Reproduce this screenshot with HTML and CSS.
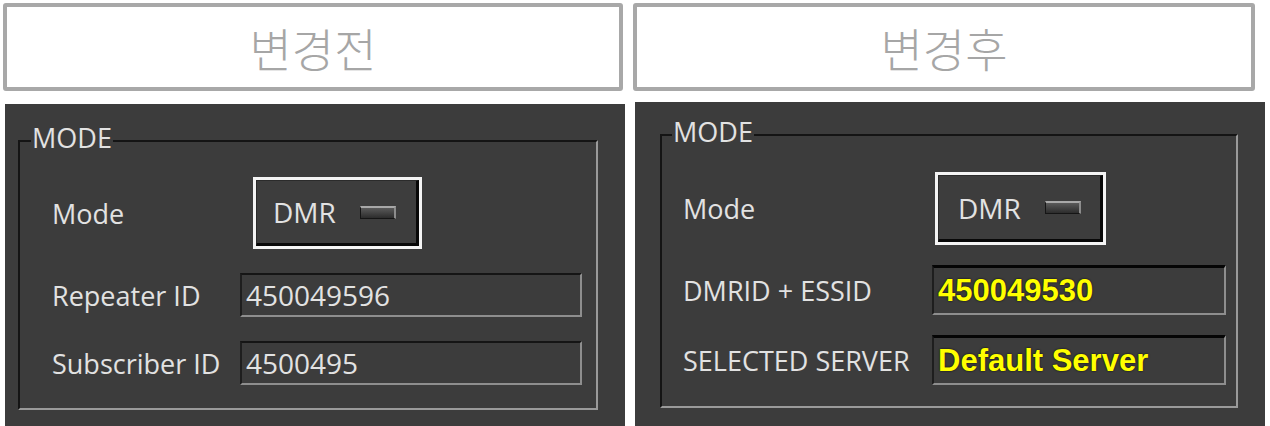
FILE: index.html
```html
<!DOCTYPE html>
<html lang="ko">
<head>
  <meta charset="UTF-8" />
  <title>MODE 변경전 / 변경후</title>
  <link rel="stylesheet" href="styles.css">
</head>
<body>

  <div class="compare">

    <div class="side before">
      <div class="caption">변경전</div>
      <div class="panel">
        <fieldset class="group">
          <legend>MODE</legend>
          <div class="rows">
            <span class="label">Mode</span>
            <div class="mode-btn">
              <div class="mode-face">DMR <span class="led"></span></div>
            </div>
            <span class="label">Repeater ID</span>
            <div class="field">450049596</div>
            <span class="label">Subscriber ID</span>
            <div class="field">4500495</div>
          </div>
        </fieldset>
      </div>
    </div>

    <div class="side after">
      <div class="caption">변경후</div>
      <div class="panel">
        <fieldset class="group">
          <legend>MODE</legend>
          <div class="rows">
            <span class="label">Mode</span>
            <div class="mode-btn">
              <div class="mode-face">DMR <span class="led"></span></div>
            </div>
            <span class="label">DMRID + ESSID</span>
            <div class="field highlight">450049530</div>
            <span class="label">SELECTED SERVER</span>
            <div class="field highlight">Default Server</div>
          </div>
        </fieldset>
      </div>
    </div>

  </div>

</body>
</html>
```

FILE: styles.css
```css
html, body {
  margin: 0;
  overflow: hidden;
}
body {
  background-color: #ffffff;
  font-family: 'Open Sans', 'Noto Sans', sans-serif;
}
.compare {
  display: flex;
  align-items: flex-start;
}
.side.before {
  margin-left: 3px;
  width: 622px;
}
.side.after {
  margin-left: 8px;
  width: 632px;
}

/* top captions */
.caption {
  box-sizing: border-box;
  margin-top: 3px;
  height: 88px;
  border: 4px solid #a8a8a8;
  border-radius: 3px;
  display: flex;
  align-items: center;
  justify-content: center;
  font-family: 'Noto Sans CJK KR', 'Noto Sans', sans-serif;
  font-weight: 300;
  font-size: 46px;
  color: #a6a6a6;
}
.before .caption { width: 620px; }
.after .caption { width: 622px; }

/* dark app panel */
.panel {
  background-color: #3c3c3c;
  margin-left: 2px;
  overflow: hidden;
}
.before .panel {
  margin-top: 13px;
  width: 620px;
  height: 322px;
}
.after .panel {
  margin-top: 11px;
  width: 630px;
  height: 324px;
}

/* etched group box */
.group {
  box-sizing: border-box;
  min-width: 0;
  margin: 0;
  padding-left: 0;
  border-top: 2px solid #141414;
  border-left: 2px solid #141414;
  border-right: 2px solid #9a9a9a;
  border-bottom: 2px solid #9a9a9a;
}
.group legend {
  padding: 0 1px 6px 1px;
  font-size: 27px;
  line-height: 30px;
  color: #e2e2e2;
}
.before .group {
  margin: 19px 0 0 13px;
  width: 580px;
  padding: 18px 14px 23px 0;
}
.before .group legend {
  margin-left: 11px;
}
.after .group {
  margin: 15px 0 0 25px;
  width: 578px;
  padding: 19px 10px 21px 0;
}
.after .group legend {
  margin-left: 10px;
}

.rows {
  display: grid;
  align-items: center;
}
.before .rows {
  grid-template-columns: 188px 1fr;
  row-gap: 24px;
  padding-left: 32px;
}
.after .rows {
  grid-template-columns: 249px 1fr;
  row-gap: 20px;
  padding-left: 21px;
}

.label {
  font-size: 27px;
  color: #e2e2e2;
  white-space: nowrap;
}

/* DMR toggle */
.mode-btn {
  box-sizing: border-box;
  border: 3px solid #f4f4f4;
  background-color: #2a2a2a;
}
.before .mode-btn {
  margin-left: 13px;
  width: 169px;
  height: 72px;
}
.after .mode-btn {
  margin-left: 3px;
  width: 171px;
  height: 73px;
}
.mode-face {
  box-sizing: border-box;
  height: 100%;
  display: flex;
  align-items: center;
  gap: 24px;
  padding-left: 16px;
  background-color: #3d3d3d;
  border-top: 1px solid #2b2b2b;
  border-left: 1px solid #2b2b2b;
  border-right: 3px solid #080808;
  border-bottom: 3px solid #080808;
  font-size: 28px;
  color: #e2e2e2;
}
.after .mode-face {
  padding-left: 19px;
}
.led {
  box-sizing: border-box;
  width: 36px;
  height: 13px;
  border: 1px solid #151515;
  border-top: 2px solid #a8a8a8;
  border-right: 2px solid #8c8c8c;
  background: linear-gradient(#5a5a5a, #2c2c2c);
}

/* sunken value fields */
.field {
  box-sizing: border-box;
  display: flex;
  align-items: center;
  padding-left: 4px;
  border-top: 2px solid #151515;
  border-left: 2px solid #1e1e1e;
  border-right: 2px solid #8e8e8e;
  border-bottom: 2px solid #8e8e8e;
  font-size: 28px;
  color: #e2e2e2;
  white-space: nowrap;
}
.before .field {
  height: 44px;
}
.after .field {
  height: 50px;
  border-top-width: 3px;
  border-top-color: #050505;
}
.field.highlight {
  font-family: 'Liberation Sans', Arial, sans-serif;
  font-weight: bold;
  font-size: 31px;
  color: #ffff00;
  text-shadow: 0 0 2px #000000;
}
```
